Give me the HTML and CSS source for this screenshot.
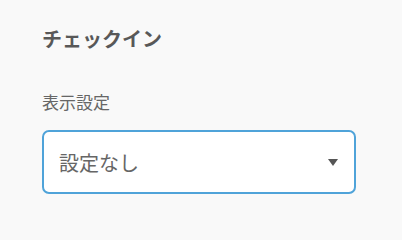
FILE: index.html
```html
<!DOCTYPE html>
<html lang="ja">
<head>
<meta charset="utf-8">
<link rel="stylesheet" href="styles.css">
</head>
<body>
<section class="panel">
  <h2 class="title">チェックイン</h2>
  <div class="field">
    <label class="label">表示設定</label>
    <div class="select">
      <span class="value">設定なし</span>
      <svg class="arrow" width="10" height="7" viewBox="0 0 10 7"><path d="M0 0H10L5 7Z" fill="#555"/></svg>
    </div>
  </div>
</section>
</body>
</html>
```
FILE: styles.css
```css
html, body {
  margin: 0;
  padding: 0;
  background: #f9f9f9;
}
body {
  font-family: "Noto Sans CJK JP", "Noto Sans", sans-serif;
  width: 402px;
  height: 226px;
  overflow: hidden;
}
.panel {
  padding: 27px 46px 0 42px;
}
.title {
  margin: 0;
  font-size: 20px;
  line-height: 24px;
  font-weight: 700;
  color: #585858;
}
.field {
  margin-top: 41px;
}
.label {
  display: block;
  font-size: 17px;
  line-height: 20px;
  color: #666;
}
.select {
  margin-top: 18px;
  height: 64px;
  box-sizing: border-box;
  border: 2px solid #4fa3d9;
  border-radius: 7px;
  background: #fff;
  display: flex;
  align-items: center;
  justify-content: space-between;
  padding: 0 16px 0 15px;
}
.value {
  font-size: 20px;
  color: #666;
}
.arrow {
  display: block;
}
```
